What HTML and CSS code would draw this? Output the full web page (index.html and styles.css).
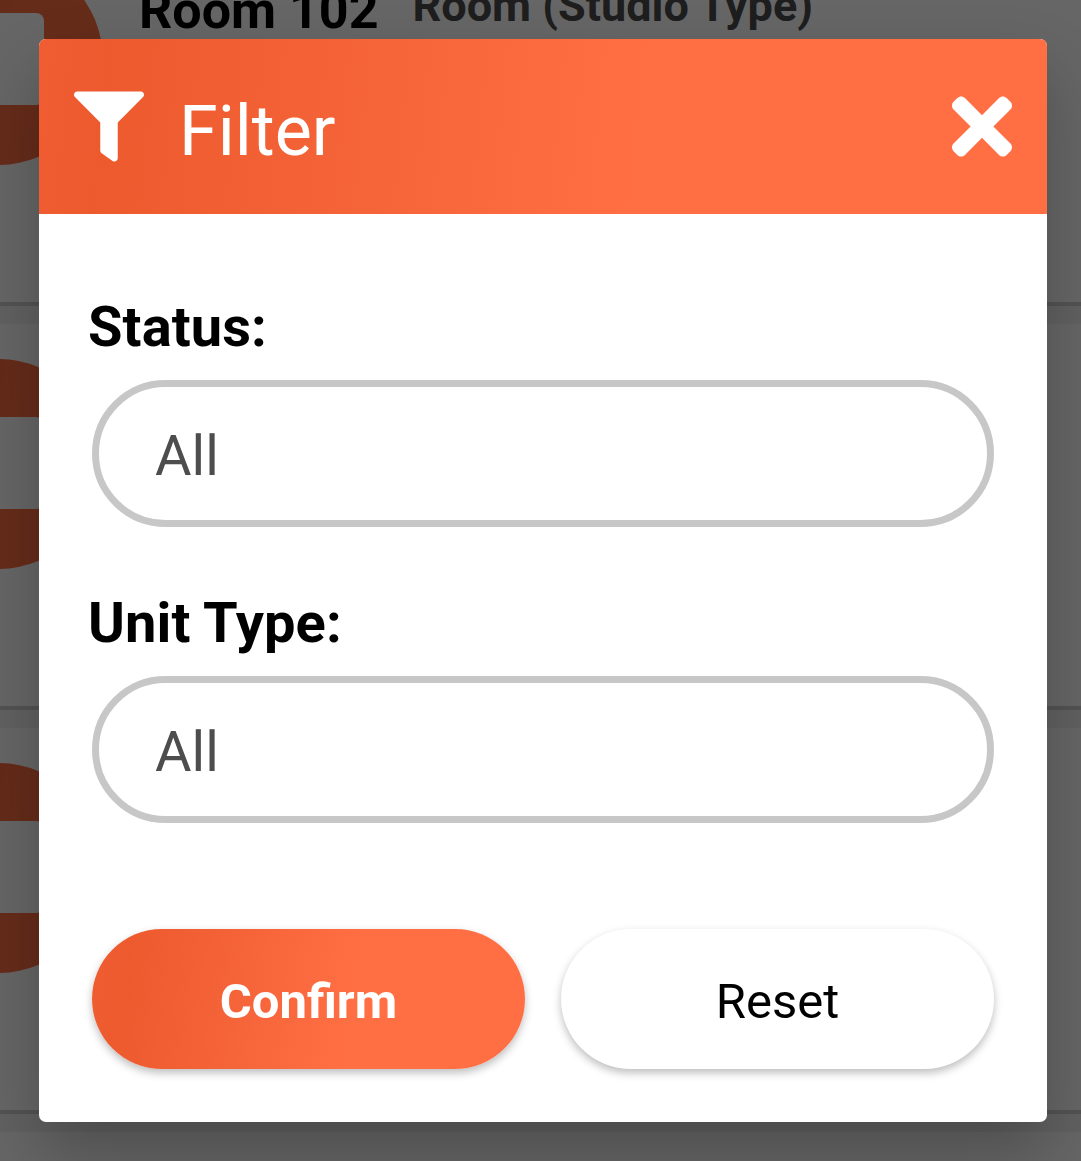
FILE: index.html
```html
<!DOCTYPE html>
<html lang="en">
<head>
<meta charset="utf-8">
<title>Filter</title>
<link rel="stylesheet" href="styles.css">
</head>
<body>
<div class="rooms">
  <div class="room">
    <div class="avatar"><div class="avatar-box"></div></div>
    <div class="room-name">Room 102</div>
    <div class="room-type">Room (Studio Type)</div>
  </div>
  <div class="room">
    <div class="avatar"><div class="avatar-box"></div></div>
  </div>
  <div class="room">
    <div class="avatar"><div class="avatar-box"></div></div>
  </div>
  <div class="room"></div>
</div>
<div class="backdrop">
  <section class="modal">
    <header class="modal-header">
      <svg class="filter-icon" viewBox="0 0 512 512"><path fill="#fff" d="M487.976 0H24.028C2.71 0-8.047 25.866 7.058 40.971L192 225.941V432c0 7.831 3.821 15.17 10.237 19.662l80 55.98C298.02 518.69 320 507.493 320 487.98V225.941l184.947-184.97C520.021 25.896 509.338 0 487.976 0z"/></svg>
      <h1 class="title">Filter</h1>
      <svg class="close-icon" viewBox="0 0 352 352"><path fill="#fff" d="M242.72 176l100.07-100.07c12.28-12.28 12.28-32.19 0-44.48l-22.24-22.24c-12.28-12.28-32.19-12.28-44.48 0L176 109.28 75.93 9.21c-12.28-12.28-32.19-12.28-44.48 0L9.21 31.45c-12.28 12.28-12.28 32.19 0 44.48L109.28 176 9.21 276.07c-12.28 12.28-12.28 32.19 0 44.48l22.24 22.24c12.28 12.28 32.2 12.28 44.48 0L176 242.72l100.07 100.07c12.28 12.28 32.2 12.28 44.48 0l22.24-22.24c12.28-12.28 12.28-32.19 0-44.48L242.72 176z"/></svg>
    </header>
    <div class="modal-body">
      <div class="label">Status:</div>
      <div class="field">All</div>
      <div class="label">Unit Type:</div>
      <div class="field">All</div>
      <div class="actions">
        <button class="button primary">Confirm</button>
        <button class="button">Reset</button>
      </div>
    </div>
  </section>
</div>
</body>
</html>
```
FILE: styles.css
```css
* { box-sizing: border-box; }
body {
  margin: 0;
  height: 1161px;
  overflow: hidden;
  position: relative;
  background: #fff;
  font-family: Roboto, sans-serif;
}
.rooms {
  height: 1259px;
  margin-top: -98px;
  overflow: hidden;
}
.room {
  height: 404px;
  display: flex;
  align-items: flex-start;
  border-bottom: 4px solid #cfcfcf;
  background: linear-gradient(#f3f3f3 18px, #fff 18px);
}
.avatar {
  flex: none;
  width: 210px;
  height: 210px;
  margin: 53px 0 0 -107px;
  padding: 58.4px 59px;
  border-radius: 50%;
  background: linear-gradient(100deg, #ec5a2e 10%, #ff6f43 55%);
}
.avatar-box { width: 92px; height: 92px; border-radius: 8px; background: #fff; }
.room-name {
  margin: 76px 0 0 36px;
  font-size: 52px;
  line-height: 66px;
  font-weight: 700;
  white-space: nowrap;
}
.room-type {
  margin: 74px 0 0 34px;
  font-size: 45px;
  line-height: 60px;
  font-weight: 700;
  color: #4d4d4d;
  white-space: nowrap;
}
.backdrop {
  position: absolute;
  inset: 0;
  padding: 39px 34px 39px 39px;
  background: rgba(0, 0, 0, .6);
}
.modal {
  height: 1083px;
  border-radius: 7px;
  overflow: hidden;
  background: #fff;
  box-shadow: 0 32px 66px rgba(0, 0, 0, .24);
}
.modal-header {
  display: flex;
  align-items: center;
  height: 175px;
  padding: 0 35px;
  background: linear-gradient(96deg, #f05d32, #ec5a2e 7%, #ff6f43 60%);
}
.filter-icon { width: 70px; height: 71px; }
.title {
  flex: 1;
  margin: 9px 0 0 35px;
  font-size: 70px;
  line-height: 82px;
  font-weight: 400;
  color: #fff;
}
.close-icon { width: 60px; height: 61px; }
.modal-body { padding: 80px 53px 0; }
.label {
  height: 66px;
  margin-left: -4px;
  font-size: 56px;
  line-height: 66px;
  font-weight: 700;
  letter-spacing: .1px;
  color: #000;
}
.field {
  height: 147px;
  margin: 20px 0 63px;
  padding: 0 56px;
  border: 7px solid #c7c7c7;
  border-radius: 74px;
  font-size: 56px;
  line-height: 139px;
  color: #4d4d4d;
}
.actions { display: flex; gap: 36px; margin-top: 106px; }
.button {
  flex: 1;
  height: 140px;
  padding: 4px 0 0;
  border: 0;
  border-radius: 70px;
  background: #fff;
  box-shadow: 0 4px 9px rgba(0, 0, 0, .26);
  font-family: inherit;
  font-size: 49px;
  color: #000;
}
.primary {
  background: linear-gradient(99deg, #f05d32, #ec5a2e 9%, #ff6f43 60%);
  font-weight: 700;
  color: #fff;
}
```
